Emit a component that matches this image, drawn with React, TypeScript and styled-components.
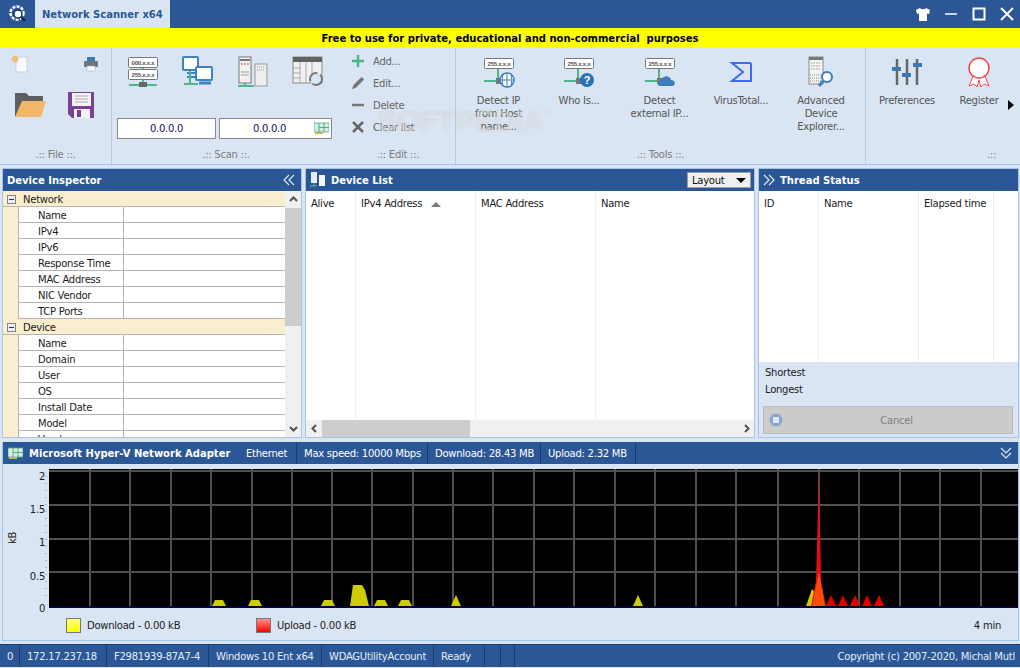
import styled, { createGlobalStyle } from "styled-components";

const BLUE = "#2b5797";
const PANEL = "#dae5f3";
const EDGE = "#a9c4e8";
const UI_FONT = `"DejaVu Sans", Verdana, sans-serif`;

const GlobalStyle = createGlobalStyle`
  html, body { margin: 0; padding: 0; background: ${PANEL}; }
  * { box-sizing: border-box; }
`;

const Window = styled.div`
  position: relative;
  width: 1020px;
  height: 668px;
  overflow: hidden;
  display: flex;
  flex-direction: column;
  background: ${PANEL};
  font-family: ${UI_FONT};
  font-size: 10px;
  letter-spacing: -0.25px;
  color: #1c1c1c;
`;

/* title bar */
const TitleBar = styled.div`
  height: 28px;
  flex: none;
  display: flex;
  align-items: stretch;
  background: ${BLUE};
`;
const AppButton = styled.div`
  width: 35px;
  display: flex;
  align-items: center;
  justify-content: center;
`;
const AppTab = styled.div`
  width: 135px;
  background: ${PANEL};
  color: ${BLUE};
  font-weight: bold;
  letter-spacing: 0;
  display: flex;
  align-items: center;
  padding-left: 7px;
`;
const WinButtons = styled.div`
  margin-left: auto;
  margin-right: -1px;
  display: flex;
  align-items: center;
`;
const WinButton = styled.div`
  width: 28px;
  display: flex;
  justify-content: center;
`;
const Banner = styled.div`
  height: 20px;
  flex: none;
  background: #ffff00;
  color: #000;
  font-weight: bold;
  font-size: 10px;
  letter-spacing: 0;
  display: flex;
  align-items: center;
  justify-content: center;
`;

/* ribbon */
const Ribbon = styled.div`
  height: 117px;
  flex: none;
  display: flex;
  border-bottom: 1px solid ${EDGE};
`;
const Group = styled.div<{ $w: number; $line?: boolean }>`
  width: ${(p) => p.$w}px;
  flex: none;
  display: flex;
  flex-direction: column;
  border-right: 1px solid ${(p) => (p.$line ? "#b4cae8" : "transparent")};
`;
const GroupBody = styled.div`
  height: 100px;
  flex: none;
`;
const GroupLabel = styled.div<{ $shift?: number }>`
  text-align: center;
  color: #7b7b7b;
  line-height: 14px;
  padding-left: ${(p) => p.$shift ?? 0}px;
`;
const FileGrid = styled(GroupBody)`
  display: grid;
  grid-template-columns: 60px 42px;
  grid-template-rows: 30px 50px;
  justify-items: center;
  align-items: center;
  padding-top: 1px;
`;
const SmallSlot = styled.div<{ $ml: number }>`
  justify-self: start;
  display: flex;
  margin-left: ${(p) => p.$ml}px;
`;
const ScanIcons = styled.div`
  display: grid;
  grid-template-columns: repeat(4, 55px);
  justify-items: center;
  padding: 8px 0 0 3px;
  height: 70px;
`;
const ScanInputs = styled.div`
  display: flex;
  gap: 3px;
  padding-left: 5px;
`;
const IpInput = styled.div<{ $w: number }>`
  position: relative;
  width: ${(p) => p.$w}px;
  height: 21px;
  background: #fff;
  border: 1px solid #8a8a8a;
  display: flex;
  align-items: center;
  justify-content: center;
  padding-right: ${(p) => (p.$w > 100 ? 12 : 0)}px;
  color: #10106a;
`;
const InputIcon = styled.span`
  position: absolute;
  right: 2px;
  top: 3px;
  display: flex;
`;
const EditList = styled(GroupBody)`
  display: flex;
  flex-direction: column;
  padding: 2px 0 0 10px;
`;
const EditRow = styled.div`
  height: 22px;
  display: flex;
  align-items: center;
  gap: 8px;
  color: #666;
`;
const EditIcon = styled.span`
  width: 14px;
  display: flex;
  justify-content: center;
`;
const ToolRow = styled(GroupBody)<{ $pad: number }>`
  display: flex;
  padding: 8px 0 0 ${(p) => p.$pad}px;
`;
const Tool = styled.div<{ $w: number }>`
  width: ${(p) => p.$w}px;
  flex: none;
  display: flex;
  flex-direction: column;
  align-items: center;
  text-align: center;
  line-height: 13px;
  color: #555;
`;
const ToolIcon = styled.div`
  height: 32px;
  margin-bottom: 6px;
  display: flex;
  align-items: center;
`;
const MoreArrow = styled.div`
  width: 0;
  height: 0;
  flex: none;
  margin: 44px 0 0 -5px;
  border-left: 6px solid #000;
  border-top: 5px solid transparent;
  border-bottom: 5px solid transparent;
`;

/* watermark lies over the ribbon */
const Watermark = styled.div`
  position: absolute;
  left: 378px;
  top: 105px;
  font: bold 29px "Liberation Sans", sans-serif;
  letter-spacing: 0;
  color: rgba(255, 255, 255, 0.38);
  text-shadow: 0 0 2px rgba(120, 120, 120, 0.25);
  pointer-events: none;
  & sup {
    font-size: 9px;
    font-weight: normal;
    vertical-align: 16px;
  }
`;

/* panels */
const PanelRow = styled.div`
  height: 273px;
  flex: none;
  display: flex;
  padding: 3px 1px 0 2px;
  gap: 3px;
`;
const Panel = styled.section<{ $w: number; $ml?: number }>`
  width: ${(p) => p.$w}px;
  flex: none;
  height: 270px;
  display: flex;
  flex-direction: column;
  border: 1px solid ${EDGE};
  overflow: hidden;
`;
const PanelHead = styled.header`
  height: 22px;
  flex: none;
  background: ${BLUE};
  color: #fff;
  font-weight: bold;
  letter-spacing: 0;
  display: flex;
  align-items: center;
  padding: 0 4px;
`;
const HeadRight = styled.span<{ $pr?: number }>`
  margin-left: auto;
  display: flex;
  align-items: center;
  padding-right: ${(p) => p.$pr ?? 0}px;
`;
const HeadIcon = styled.span`
  display: flex;
  margin-right: 5px;
`;
const LayoutButton = styled.div`
  width: 64px;
  height: 16px;
  margin-right: -1px;
  background: #f0f0f0;
  border: 1px solid #9c9c9c;
  color: #111;
  font-weight: normal;
  letter-spacing: -0.25px;
  display: flex;
  align-items: center;
  justify-content: space-between;
  padding: 0 4px;
`;
const Caret = styled.span`
  width: 0;
  height: 0;
  border-top: 5px solid #000;
  border-left: 5px solid transparent;
  border-right: 5px solid transparent;
`;

const InspectorBody = styled.div`
  flex: 1;
  min-height: 0;
  display: flex;
  overflow: hidden;
  background: #fff;
`;
const PropGrid = styled.div`
  width: 282px;
  flex: none;
`;
const CategoryRow = styled.div`
  height: 16px;
  background: #fbeecf;
  display: flex;
  align-items: center;
  border-bottom: 1px solid #b5b5b5;
  padding: 1px 0 0 4px;
  gap: 7px;
  color: #222;
`;
const Toggle = styled.span`
  width: 9px;
  height: 9px;
  border: 1px solid #7d8794;
  background: #eef1f5;
  display: flex;
  align-items: center;
  justify-content: center;
  &::after {
    content: "";
    width: 5px;
    height: 1px;
    background: #333;
  }
`;
const PropRow = styled.div`
  height: 16px;
  display: flex;
  background: #fbeecf;
  padding-left: 15px;
`;
const PropName = styled.div`
  width: 106px;
  background: #fff;
  border-left: 1px solid #b5b5b5;
  border-bottom: 1px solid #b5b5b5;
  border-right: 1px solid #b5b5b5;
  padding: 1px 0 0 19px;
  line-height: 15px;
`;
const PropValue = styled.div`
  flex: 1;
  background: #fff;
  border-bottom: 1px solid #b5b5b5;
`;
const VBar = styled.div`
  flex: 1;
  background: #f0f0f0;
  display: flex;
  flex-direction: column;
  align-items: center;
`;
const BarArrow = styled.div`
  height: 17px;
  flex: none;
  width: 100%;
  display: flex;
  align-items: center;
  justify-content: center;
`;
const VThumb = styled.div`
  width: 100%;
  height: 118px;
  background: #cdcdcd;
`;
const VSpacer = styled.div`
  flex: 1;
`;

const TableWrap = styled.div`
  flex: 1;
  min-height: 0;
  background: #fff;
  display: flex;
  flex-direction: column;
`;
const ColHeads = styled.div`
  flex: 1;
  min-height: 0;
  display: flex;
`;
const Col = styled.div<{ $w: number; $last?: boolean }>`
  width: ${(p) => p.$w}px;
  flex: none;
  height: 100%;
  padding: 7px 0 0 5px;
  display: flex;
  align-items: flex-start;
  gap: 6px;
  border-right: 1px solid ${(p) => (p.$last ? "transparent" : "#eeeeee")};
`;
const SortMark = styled.span`
  width: 0;
  height: 0;
  margin: 4px 0 0 3px;
  border-bottom: 5px solid #7a7a7a;
  border-left: 5px solid transparent;
  border-right: 5px solid transparent;
`;
const HBar = styled.div`
  height: 17px;
  flex: none;
  display: flex;
  background: #f0f0f0;
`;
const HArrow = styled.div`
  width: 16px;
  flex: none;
  display: flex;
  align-items: center;
  justify-content: center;
`;
const HThumb = styled.div`
  width: 148px;
  background: #cdcdcd;
`;
const ThreadTable = styled.div`
  height: 171px;
  flex: none;
  display: flex;
  background: #fff;
`;
const ThreadFoot = styled.div`
  flex: 1;
  padding: 2px 5px 0 6px;
  display: flex;
  flex-direction: column;
`;
const StatLine = styled.div`
  height: 17px;
  display: flex;
  align-items: center;
`;
const CancelButton = styled.div`
  position: relative;
  height: 28px;
  margin: 8px 0 0 -2px;
  background: #cbcbcb;
  border: 1px solid #bcbcbc;
  color: #7e7e7e;
  display: flex;
  align-items: center;
  justify-content: center;
  padding-left: 17px;
`;
const CancelIcon = styled.span`
  position: absolute;
  left: 5px;
  top: 6px;
  display: flex;
`;

/* network */
const NetPanel = styled.section`
  height: 199px;
  flex: none;
  margin: 4px 1px 0 2px;
  border: solid ${EDGE};
  border-width: 0 1px 1px 1px;
  display: flex;
  flex-direction: column;
`;
const NetHead = styled.header`
  height: 22px;
  flex: none;
  background: ${BLUE};
  color: #fff;
  display: flex;
  align-items: center;
`;
const NetTitle = styled.div`
  width: 236px;
  flex: none;
  font-weight: bold;
  letter-spacing: 0;
  padding-left: 5px;
  display: flex;
  align-items: center;
  gap: 6px;
`;
const NetCell = styled.div<{ $w: number }>`
  width: ${(p) => p.$w}px;
  flex: none;
  height: 100%;
  display: flex;
  align-items: center;
  padding-left: 7px;
  border-right: 1px solid #1c3d70;
`;
const Plot = styled.svg`
  display: block;
  flex: none;
`;
const Legend = styled.div`
  height: 25px;
  flex: none;
  display: flex;
  align-items: center;
  padding: 0 17px 4px 63px;
`;
const LegendItem = styled.div<{ $w: number }>`
  width: ${(p) => p.$w}px;
  display: flex;
  align-items: center;
  gap: 6px;
`;
const Swatch = styled.span<{ $hi: string; $lo: string }>`
  width: 15px;
  height: 15px;
  border: 1px solid #777;
  background: linear-gradient(${(p) => p.$hi}, ${(p) => p.$lo});
`;
const TimeLabel = styled.div`
  margin-left: auto;
`;

/* status */
const StatusBar = styled.footer`
  height: 23px;
  margin-top: 3px;
  flex: none;
  background: ${BLUE};
  color: #e6eef9;
  display: flex;
  align-items: stretch;
  border-top: 1px solid #1c3d70;
`;
const StatusCell = styled.div<{ $w: number }>`
  width: ${(p) => p.$w}px;
  flex: none;
  padding-left: 7px;
  display: flex;
  align-items: center;
  white-space: nowrap;
  border-right: 1px solid #1c3d70;
`;
const Copyright = styled.div`
  margin-left: auto;
  padding-right: 5px;
  display: flex;
  align-items: center;
  white-space: nowrap;
`;

/* icons */
const TinyBox = ({ x, y, w = 30, label }: { x: number; y: number; w?: number; label: string }) => (
  <g>
    <rect x={x + 0.5} y={y + 0.5} width={w - 1} height={10} rx="1" fill="#fff" stroke="#777" />
    <text x={x + w / 2} y={y + 7.5} textAnchor="middle" fontSize="6" fontWeight="bold" fontFamily="Liberation Sans" fill="#555">
      {label}
    </text>
  </g>
);

const Link = ({ x, y, w = 14, h = 12 }: { x: number; y: number; w?: number; h?: number }) => (
  <g>
    <path d={`M${x + w} ${y}v${h}H${x}`} fill="none" stroke="#4fb58a" strokeWidth="2" />
    <rect x={x + w - 2} y={y + h - 3} width="6" height="6" fill="#777" />
  </g>
);

const HostIcon = ({ children }: { children: React.ReactNode }) => (
  <svg width="34" height="32" viewBox="0 0 34 32">
    <TinyBox x={2} y={2} label="255.x.x.x" />
    <Link x={2} y={13} />
    {children}
  </svg>
);

const AppLogo = () => (
  <svg width="18" height="18" viewBox="0 0 18 18">
    <circle cx="8" cy="8" r="6.5" fill="none" stroke="#fff" strokeWidth="2.5" strokeDasharray="3 1.2" />
    <circle cx="9" cy="9" r="4" fill="#fff" stroke="#12305e" strokeWidth="1.4" />
    <path d="M12 12l4 4" stroke="#0b1f3d" strokeWidth="2" />
  </svg>
);

const ShirtIcon = () => (
  <svg width="16" height="15" viewBox="0 0 16 15">
    <path d="M5 1L1 3l1 4 2-.6V14h8V6.4L14 7l1-4-4-2c-.5 1.6-5.500 1.600-6 0z" fill="#fff" />
  </svg>
);

const NewDocIcon = () => (
  <svg width="20" height="20" viewBox="0 0 20 20">
    <rect x="6" y="3" width="11" height="15" fill="#fafbfd" stroke="#c8d2df" />
    <circle cx="5" cy="5" r="3" fill="#e8b765" />
    <path d="M1 5h8M5 1v8M2 2l6 6M8 2l-6 6" stroke="#f3c77d" strokeWidth=".8" />
  </svg>
);

const PrinterIcon = () => (
  <svg width="16" height="16" viewBox="0 0 16 16">
    <rect x="4" y="1" width="8" height="5" fill="#3b7ab8" />
    <rect x="1" y="5" width="14" height="6" rx="1" fill="#6d7782" />
    <rect x="4" y="10" width="8" height="5" fill="#f5f7fa" stroke="#aab" strokeWidth=".5" />
  </svg>
);

const FolderIcon = () => (
  <svg width="34" height="28" viewBox="0 0 34 28">
    <path d="M2 26V3h11l3 3h14v6H10L4 26z" fill="#5f5f5f" />
    <path d="M9 11h24l-5 16H2z" fill="#f2b668" />
  </svg>
);

const DiskIcon = () => (
  <svg width="27" height="27" viewBox="0 0 27 27">
    <path d="M0 1h26v26H4l-4-4z" fill="#7c3f98" />
    <rect x="4" y="2" width="19" height="13" fill="#f4f4f6" />
    <path d="M7 5h13M7 8h13M7 11h13" stroke="#b0a8b8" />
    <rect x="6" y="18" width="16" height="9" fill="#f4f4f6" />
    <rect x="9" y="19" width="4" height="7" fill="#7c3f98" />
  </svg>
);

const IpPairIcon = () => (
  <svg width="32" height="32" viewBox="0 0 32 32">
    <TinyBox x={1} y={1} label="000.x.x.x" />
    <TinyBox x={1} y={13} label="255.x.x.x" />
    <path d="M16 11.500v2M16 24v5M2 29h28" stroke="#4fb58a" strokeWidth="2" />
    <rect x="12" y="26" width="8" height="5" fill="#666" />
  </svg>
);

const PcsIcon = () => (
  <svg width="32" height="32" viewBox="0 0 32 32">
    <rect x="1" y="1" width="15" height="13" rx="1" fill="#fff" stroke="#3c82c4" strokeWidth="2" />
    <path d="M5 17h8M5 21h8" stroke="#3c82c4" strokeWidth="2" />
    <path d="M8 15v13M2 28h14" stroke="#4fb58a" strokeWidth="2" />
    <rect x="14" y="11" width="16" height="13" rx="1" fill="#fff" stroke="#3c82c4" strokeWidth="2" />
    <path d="M17 27h12" stroke="#3c82c4" strokeWidth="3" />
  </svg>
);

const ServersIcon = () => (
  <svg width="32" height="32" viewBox="0 0 32 32">
    <rect x="2" y="1" width="12" height="26" fill="#f2f2f2" stroke="#777" />
    <path d="M3 4h10" stroke="#777" strokeWidth="2" />
    <path d="M4 8h2M7 8h2M10 8h2" stroke="#c44" />
    <path d="M4 16h8M4 19h8" stroke="#999" />
    <rect x="18" y="8" width="12" height="22" fill="#eee" stroke="#999" />
    <path d="M20 11h8M20 14h8" stroke="#999" strokeDasharray="1 1" />
    <path d="M8 27v3M1 30h16" stroke="#4fb58a" strokeWidth="2" />
  </svg>
);

const TableRefreshIcon = () => (
  <svg width="32" height="32" viewBox="0 0 32 32">
    <rect x="1" y="1" width="29" height="26" fill="#f0f0f0" stroke="#8a8a8a" />
    <rect x="1" y="1" width="29" height="5" fill="#616161" />
    <path d="M8 6v21M14 6v21M20 6v21M1 12h7M1 17h7M1 22h7" stroke="#aaa" />
    <circle cx="24" cy="23" r="6" fill="#dae5f3" stroke="#777" strokeWidth="2" strokeDasharray="13 3" />
  </svg>
);

const AdapterIcon = ({ size = 15 }: { size?: number }) => (
  <svg width={size} height={size - 3} viewBox="0 0 15 12">
    <rect x="0" y="1" width="15" height="9" fill="#d6eee2" stroke="#52ad85" strokeWidth=".8" />
    <path d="M5 1v9M10 1v9M5 5.500h10" stroke="#52ad85" />
    <rect x="1" y="10" width="8" height="2" fill="#c7b657" />
  </svg>
);

const PencilIcon = () => (
  <svg width="16" height="16" viewBox="0 0 16 16">
    <path d="M1 15l2-5L12 1l3 3-9 9z" fill="#777" />
  </svg>
);

const SigmaIcon = () => (
  <svg width="24" height="24" viewBox="0 0 24 24">
    <path d="M22 3H3l11 9-11 9h19V3" fill="none" stroke="#3c6cf0" strokeWidth="2" />
  </svg>
);

const DeviceSearchIcon = () => (
  <svg width="28" height="32" viewBox="0 0 28 32">
    <rect x="2" y="1" width="14" height="27" fill="#f4f4f4" stroke="#8a8a8a" />
    <rect x="2" y="1" width="14" height="3" fill="#777" />
    <path d="M4 7h10M4 10h10M4 13h10" stroke="#999" strokeDasharray="1.500 1" />
    <path d="M3 19h12M3 22h12M3 25h12" stroke="#888" strokeDasharray="1 1" />
    <circle cx="20" cy="21" r="5" fill="#fff" stroke="#3c7ebd" strokeWidth="2" />
    <path d="M16 25l-4 5" stroke="#3c7ebd" strokeWidth="3" />
  </svg>
);

const SlidersIcon = () => (
  <svg width="32" height="28" viewBox="0 0 32 28">
    <path d="M6 1v26M16 1v26M26 1v26" stroke="#666" strokeWidth="2.500" />
    <rect x="1" y="9" width="9" height="4" fill="#3c78b4" />
    <rect x="11" y="15" width="9" height="4" fill="#3c78b4" />
    <rect x="22" y="5" width="9" height="4" fill="#3c78b4" />
  </svg>
);

const RibbonIcon = () => (
  <svg width="24" height="32" viewBox="0 0 24 32">
    <path d="M6 20L2 30l5-2 3 3 2-7 2 7 3-3 5 2-4-10" fill="#fff" stroke="#f04a4a" />
    <circle cx="12" cy="12" r="10" fill="#fff" stroke="#f04a4a" strokeWidth="1.500" />
  </svg>
);

const Chevrons = ({ dir, size = 12 }: { dir: "left" | "right" | "down"; size?: number }) => {
  const rot = dir === "left" ? 180 : dir === "down" ? 90 : 0;
  return (
    <svg width={size} height={size} viewBox="0 0 12 12">
      <g transform={`rotate(${rot} 6 6)`} fill="none" stroke="#dfe7f2" strokeWidth="1.200">
        <path d="M1 1l5 5-5 5" />
        <path d="M6 1l5 5-5 5" />
      </g>
    </svg>
  );
};

const DeviceListIcon = () => (
  <svg width="16" height="16" viewBox="0 0 16 16">
    <rect x="1" y="0" width="6" height="11" fill="#e9edf3" />
    <rect x="9" y="3" width="6" height="11" fill="#f4f6f9" />
    <path d="M0 14h7" stroke="#56b48c" />
    <path d="M4 11v3" stroke="#56b48c" />
  </svg>
);

const Chev = ({ d }: { d: string }) => (
  <svg width="9" height="9" viewBox="0 0 9 9">
    <path d={d} fill="none" stroke="#505050" strokeWidth="2" />
  </svg>
);

/* data */
const networkRows = ["Name", "IPv4", "IPv6", "Response Time", "MAC Address", "NIC Vendor", "TCP Ports"];
const deviceRows = ["Name", "Domain", "User", "OS", "Install Date", "Model", "Vendor"];

const gridX = [90, 130, 171, 211, 252, 292, 332, 372, 413, 453, 493, 534, 574, 615, 655, 696, 736, 778, 819, 859, 900, 940, 981];
const gridY = [472, 506, 540, 573];
const OY = 465;
const OX = 3;
const bumps = [212, 248, 321, 374, 398];
const reds = [831, 843, 855, 867, 879];

const Chart = () => (
  <Plot width="1015" height="151" viewBox={`${OX} ${OY} 1015 151`}>
    <rect x="49" y="470" width="969" height="139" fill="#000" />
    {gridX.map((x) => (
      <rect key={x} x={x - 1} y="470" width="2" height="138" fill="#505050" />
    ))}
    {gridY.map((y) => (
      <rect key={y} x="49" y={y - 1} width="969" height="2" fill="#505050" />
    ))}
    <rect x="49" y="607" width="969" height="2" fill="#050533" />
    {bumps.map((x) => (
      <path key={x} d={`M${x} 607l3-6h8l3 6z`} fill="#cccc00" />
    ))}
    <path d="M350 607l3-21h9l3 5 4 16z" fill="#cccc00" />
    <path d="M451 607l5-11 5 11zM633 607l5-11 5 11z" fill="#cccc00" />
    <path d="M806 607l6-17 14 17z" fill="#cccc00" />
    <path d="M811 607l5-25 3-110 2 110 5 25z" fill="#e01010" />
    <path d="M812 607l7-34 6 34z" fill="#ff4a08" />
    {reds.map((x) => (
      <path key={x} d={`M${x - 5} 607l5-11 5 11z`} fill="#e00000" />
    ))}
    <g fontSize="10" fontFamily="DejaVu Sans" fill="#1c1c1c" textAnchor="end">
      <text x="45" y="481">2</text>
      <text x="45" y="514">1.5</text>
      <text x="45" y="547">1</text>
      <text x="45" y="581">0.5</text>
      <text x="45" y="613">0</text>
    </g>
    {[477, 484, 491, 498, 505, 512, 519, 526, 533, 540, 547, 554, 561, 568, 575, 582, 589, 596].map((y) => (
      <rect key={y} x="45" y={y} width="2" height="1" fill="#aeb6c0" />
    ))}
    <text transform="translate(16 545) rotate(-90)" fontSize="10" fontFamily="DejaVu Sans" fill="#1c1c1c">kB</text>
  </Plot>
);

export default function App() {
  return (
    <Window>
      <GlobalStyle />
      <TitleBar>
        <AppButton><AppLogo /></AppButton>
        <AppTab>Network Scanner x64</AppTab>
        <WinButtons>
          <WinButton><ShirtIcon /></WinButton>
          <WinButton>
            <svg width="14" height="14" viewBox="0 0 14 14"><path d="M1 7h12" stroke="#fff" strokeWidth="1.500" /></svg>
          </WinButton>
          <WinButton>
            <svg width="14" height="14" viewBox="0 0 14 14"><rect x="1.500" y="1.500" width="11" height="11" fill="none" stroke="#fff" strokeWidth="2" /></svg>
          </WinButton>
          <WinButton>
            <svg width="14" height="14" viewBox="0 0 14 14"><path d="M1 1l12 12M13 1L1 13" stroke="#fff" strokeWidth="2" /></svg>
          </WinButton>
        </WinButtons>
      </TitleBar>
      <Banner>Free to use for private, educational and non-commercial&nbsp; purposes</Banner>

      <Ribbon>
        <Group $w={112} $line>
          <FileGrid>
            <SmallSlot $ml={10}><NewDocIcon /></SmallSlot>
            <SmallSlot $ml={23}><PrinterIcon /></SmallSlot>
            <FolderIcon />
            <DiskIcon />
          </FileGrid>
          <GroupLabel>.:: File ::.</GroupLabel>
        </Group>
        <Group $w={229}>
          <GroupBody>
            <ScanIcons>
              <IpPairIcon />
              <PcsIcon />
              <ServersIcon />
              <TableRefreshIcon />
            </ScanIcons>
            <ScanInputs>
              <IpInput $w={99}>0.0.0.0</IpInput>
              <IpInput $w={113}>
                0.0.0.0
                <InputIcon><AdapterIcon /></InputIcon>
              </IpInput>
            </ScanInputs>
          </GroupBody>
          <GroupLabel>.:: Scan ::.</GroupLabel>
        </Group>
        <Group $w={115} $line>
          <EditList>
            <EditRow>
              <EditIcon>
                <svg width="14" height="14" viewBox="0 0 14 14"><path d="M7 1v12M1 7h12" stroke="#4fb58a" strokeWidth="2.500" /></svg>
              </EditIcon>
              Add...
            </EditRow>
            <EditRow>
              <EditIcon><PencilIcon /></EditIcon>
              Edit...
            </EditRow>
            <EditRow>
              <EditIcon>
                <svg width="14" height="14" viewBox="0 0 14 14"><path d="M1 7h12" stroke="#777" strokeWidth="2.500" /></svg>
              </EditIcon>
              Delete
            </EditRow>
            <EditRow>
              <EditIcon>
                <svg width="14" height="14" viewBox="0 0 14 14"><path d="M2 2l10 10M12 2L2 12" stroke="#666" strokeWidth="2.500" /></svg>
              </EditIcon>
              Clear list
            </EditRow>
          </EditList>
          <GroupLabel>.:: Edit ::.</GroupLabel>
        </Group>
        <Group $w={410} $line>
          <ToolRow $pad={2}>
            <Tool $w={81}>
              <ToolIcon>
                <HostIcon>
                  <circle cx="25" cy="24" r="7" fill="#fff" stroke="#3c7ebd" strokeWidth="1.500" />
                  <path d="M18 24h14M25 17v14M21 18c-1 4-1 8 0 12M29 18c1 4 1 8 0 12" fill="none" stroke="#3c7ebd" />
                </HostIcon>
              </ToolIcon>
              Detect IP<br />from Host<br />name...
            </Tool>
            <Tool $w={80}>
              <ToolIcon>
                <HostIcon>
                  <circle cx="25" cy="24" r="7" fill="#2b71b5" />
                  <text x="25" y="28" fontSize="11" fontWeight="bold" fontFamily="Liberation Sans" fill="#fff" textAnchor="middle">?</text>
                </HostIcon>
              </ToolIcon>
              Who Is...
            </Tool>
            <Tool $w={81}>
              <ToolIcon>
                <HostIcon>
                  <path d="M17 30c-3 0-3-5 1-5 1-6 9-6 10-1 5 0 5 6 1 6z" fill="#3c7ebd" />
                </HostIcon>
              </ToolIcon>
              Detect<br />external IP...
            </Tool>
            <Tool $w={82}>
              <ToolIcon><SigmaIcon /></ToolIcon>
              VirusTotal...
            </Tool>
            <Tool $w={78}>
              <ToolIcon><DeviceSearchIcon /></ToolIcon>
              Advanced<br />Device<br />Explorer...
            </Tool>
          </ToolRow>
          <GroupLabel>.:: Tools ::.</GroupLabel>
        </Group>
        <Group $w={154}>
          <ToolRow $pad={3}>
            <Tool $w={76}>
              <ToolIcon><SlidersIcon /></ToolIcon>
              Preferences
            </Tool>
            <Tool $w={68}>
              <ToolIcon><RibbonIcon /></ToolIcon>
              Register
            </Tool>
            <MoreArrow />
          </ToolRow>
          <GroupLabel $shift={98}>.::</GroupLabel>
        </Group>
      </Ribbon>

      <PanelRow>
        <Panel $w={300}>
          <PanelHead>
            Device Inspector
            <HeadRight $pr={2}><Chevrons dir="left" /></HeadRight>
          </PanelHead>
          <InspectorBody>
            <PropGrid>
              <CategoryRow><Toggle />Network</CategoryRow>
              {networkRows.map((r) => (
                <PropRow key={r}><PropName>{r}</PropName><PropValue /></PropRow>
              ))}
              <CategoryRow><Toggle />Device</CategoryRow>
              {deviceRows.map((r) => (
                <PropRow key={r}><PropName>{r}</PropName><PropValue /></PropRow>
              ))}
            </PropGrid>
            <VBar>
              <BarArrow><Chev d="M1 6l3.500-3.500L8 6" /></BarArrow>
              <VThumb />
              <VSpacer />
              <BarArrow><Chev d="M1 3l3.500 3.500L8 3" /></BarArrow>
            </VBar>
          </InspectorBody>
        </Panel>

        <Panel $w={450}>
          <PanelHead>
            <HeadIcon><DeviceListIcon /></HeadIcon>
            Device List
            <HeadRight>
              <LayoutButton>Layout<Caret /></LayoutButton>
            </HeadRight>
          </PanelHead>
          <TableWrap>
            <ColHeads>
              <Col $w={50}>Alive</Col>
              <Col $w={120}>IPv4 Address<SortMark /></Col>
              <Col $w={120}>MAC Address</Col>
              <Col $w={120} $last>Name</Col>
            </ColHeads>
            <HBar>
              <HArrow><Chev d="M6 1L2.500 4.500 6 8" /></HArrow>
              <HThumb />
              <VSpacer />
              <HArrow><Chev d="M3 1l3.500 3.500L3 8" /></HArrow>
            </HBar>
          </TableWrap>
        </Panel>

        <Panel $w={261}>
          <PanelHead>
            <HeadIcon><Chevrons dir="right" /></HeadIcon>
            Thread Status
          </PanelHead>
          <ThreadTable>
            <Col $w={60}>ID</Col>
            <Col $w={100}>Name</Col>
            <Col $w={75}>Elapsed time</Col>
          </ThreadTable>
          <ThreadFoot>
            <StatLine>Shortest</StatLine>
            <StatLine>Longest</StatLine>
            <CancelButton>
              <CancelIcon>
                <svg width="14" height="14" viewBox="0 0 14 14">
                  <circle cx="7" cy="7" r="6.500" fill="#86a7cd" />
                  <rect x="4" y="4" width="6" height="6" fill="#dfe6ee" />
                </svg>
              </CancelIcon>
              Cancel
            </CancelButton>
          </ThreadFoot>
        </Panel>
      </PanelRow>

      <NetPanel>
        <NetHead>
          <NetTitle><AdapterIcon />Microsoft Hyper-V Network Adapter</NetTitle>
          <NetCell $w={58}>Ethernet</NetCell>
          <NetCell $w={131}>Max speed: 10000 Mbps</NetCell>
          <NetCell $w={113}>Download: 28.43 MB</NetCell>
          <NetCell $w={95}>Upload: 2.32 MB</NetCell>
          <HeadRight $pr={6}><Chevrons dir="down" /></HeadRight>
        </NetHead>
        <Chart />
        <Legend>
          <LegendItem $w={190}><Swatch $hi="#ffff80" $lo="#ffff00" />Download - 0.00 kB</LegendItem>
          <LegendItem $w={200}><Swatch $hi="#ff9090" $lo="#ff0000" />Upload - 0.00 kB</LegendItem>
          <TimeLabel>4 min</TimeLabel>
        </Legend>
      </NetPanel>

      <StatusBar>
        <StatusCell $w={20}>0</StatusCell>
        <StatusCell $w={87}>172.17.237.18</StatusCell>
        <StatusCell $w={102}>F2981939-87A7-4</StatusCell>
        <StatusCell $w={113}>Windows 10 Ent x64</StatusCell>
        <StatusCell $w={112}>WDAGUtilityAccount</StatusCell>
        <StatusCell $w={51}>Ready</StatusCell>
        <StatusCell $w={16} />
        <StatusCell $w={14} />
        <Copyright>Copyright (c) 2007-2020, Michal Mutl</Copyright>
      </StatusBar>

      <Watermark>SOFTPEDIA<sup>®</sup></Watermark>
    </Window>
  );
}
